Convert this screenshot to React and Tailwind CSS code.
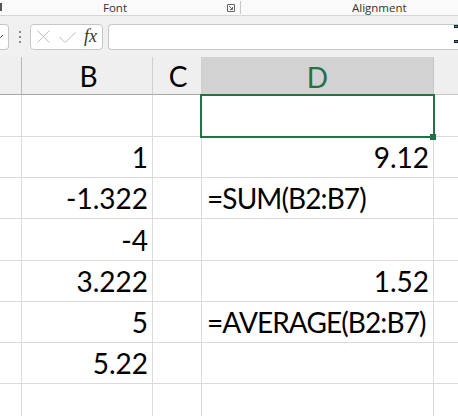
import React from "react";

const rows = [
  { b: "", d: "", dAlign: "right", h: "h-[42px]" },
  { b: "1", d: "9.12", dAlign: "right", h: "h-[41px]" },
  { b: "-1.322", d: "=SUM(B2:B7)", dAlign: "left", h: "h-[41px]" },
  { b: "-4", d: "", dAlign: "right", h: "h-[42px]" },
  { b: "3.222", d: "1.52", dAlign: "right", h: "h-[41px]" },
  { b: "5", d: "=AVERAGE(B2:B7)", dAlign: "left", h: "h-[41px]" },
  { b: "5.22", d: "", dAlign: "right", h: "h-[41px]" },
  { b: "", d: "", dAlign: "right", h: "h-[41px]" },
];

export default function App() {
  return (
    <div className="w-[458px] h-[416px] overflow-hidden bg-white relative font-['Lato',sans-serif] text-black">
      {/* Ribbon group labels */}
      <div className="h-[16px] bg-[#fafafa] border-b border-[#d6d6d6] flex items-center text-[11.5px] leading-none text-[#333] font-['Open_Sans',sans-serif]">
        <div className="w-[240px] h-full flex items-center">
          <div className="w-[2px] h-[8px] bg-[#555] mt-[-2px]" />
          <span className="ml-[101px]">Font</span>
          <svg className="ml-auto mr-[5px]" width="8" height="8" viewBox="0 0 8 8">
            <path d="M0.5 0.5 H7.5 V7.5 H0.5 Z" fill="none" stroke="#666" strokeWidth="1" />
            <path d="M2 2 L5.5 5.5 M5.5 3 V5.5 H3" fill="none" stroke="#666" strokeWidth="1" />
          </svg>
        </div>
        <div className="w-px h-[13px] bg-[#c8c8c8]" />
        <span className="ml-[111px]">Alignment</span>
      </div>

      {/* Formula bar */}
      <div className="h-[41px] bg-[#f0f0f0] flex items-center">
        <div className="w-[9px] h-[26px] bg-white border border-l-0 border-[#c6c6c6] rounded-r-[4px] flex items-center overflow-hidden">
          <svg width="5" height="5" viewBox="0 0 5 5" className="ml-[-2px]">
            <path d="M0 1 L2.5 3.5 L5 1" fill="none" stroke="#444" strokeWidth="1" />
          </svg>
        </div>
        <div className="ml-[10px] flex flex-col gap-[3px]">
          <div className="w-[2px] h-[2px] bg-[#8a8a8a]" />
          <div className="w-[2px] h-[2px] bg-[#8a8a8a]" />
          <div className="w-[2px] h-[2px] bg-[#8a8a8a]" />
        </div>
        <div className="ml-[9px] w-[73px] h-[26px] bg-white border border-[#c6c6c6] rounded-[4px] flex items-center">
          <svg className="ml-[6px]" width="13" height="13" viewBox="0 0 13 13">
            <path d="M0.5 0.5 L12.5 12.5 M12.5 0.5 L0.5 12.5" fill="none" stroke="#bdbdbd" strokeWidth="1" />
          </svg>
          <svg className="ml-[9px] mt-[2px]" width="17" height="11" viewBox="0 0 17 11">
            <path d="M0.5 5 L6 10.5 L16.5 0.5" fill="none" stroke="#bdbdbd" strokeWidth="1" />
          </svg>
          <span className="ml-[8px] font-['Liberation_Serif',serif] italic text-[18px] leading-none text-[#333] mt-[-2px]">
            fx
          </span>
        </div>
        <div className="ml-[5px] flex-1 h-[26px] bg-white border border-r-0 border-[#c6c6c6] rounded-l-[4px]" />
      </div>

      {/* Column header */}
      <div className="h-[38px] flex bg-[#efefef] text-[28px] leading-none">
        <div className="w-[22px] border-r border-b border-r-[#b9b9b9] border-b-[#a6a6a6]" />
        <div className="w-[131px] border-r border-b border-r-[#cfcfcf] border-b-[#a6a6a6] flex items-end justify-center pb-[4px] pl-[3px]">
          B
        </div>
        <div className="w-[49px] border-r border-b border-r-[#cfcfcf] border-b-[#a6a6a6] flex items-end justify-center pb-[4px] pl-[2px]">
          C
        </div>
        <div className="w-[232px] bg-[#d2d2d2] border-r border-r-[#c6c6c6] flex items-end justify-center pb-[4px] text-[#217346]">
          D
        </div>
        <div className="flex-1 border-b border-b-[#c6c6c6]" />
      </div>

      {/* Grid */}
      {rows.map((r, i) => (
        <div key={i} className={`${r.h} flex text-[28px] leading-none`}>
          <div className="w-[22px] border-r border-b border-[#dadada]" />
          <div className="w-[131px] border-r border-b border-[#dadada] flex items-end justify-end pr-[4px] pb-[6px]">
            {r.b}
          </div>
          <div className="w-[49px] border-r border-b border-[#dadada]" />
          <div
            className={`w-[232px] border-r border-b border-[#dadada] flex items-end pb-[6px] whitespace-nowrap ${
              r.dAlign === "left" ? "justify-start pl-[5px] tracking-[-0.9px]" : "justify-end pr-[4px]"
            }`}
          >
            {r.d}
          </div>
          <div className="flex-1 border-b border-[#dadada]" />
        </div>
      ))}

      {/* Selection box on D1 */}
      <div className="absolute left-[200px] top-[94px] w-[235px] h-[44px] border-2 border-[#217346]" />
      <div className="absolute left-[430px] top-[134px] w-[6px] h-[6px] bg-[#217346]" />

      {/* Right edge markers */}
      <div className="absolute left-[454px] top-[25px] w-[4px] h-[3px] border border-[#1a1a1a] bg-[#22b8e8]" />
      <div className="absolute left-[454px] top-[40px] w-[4px] h-[3px] border border-[#1a1a1a] bg-[#22b8e8]" />
    </div>
  );
}
